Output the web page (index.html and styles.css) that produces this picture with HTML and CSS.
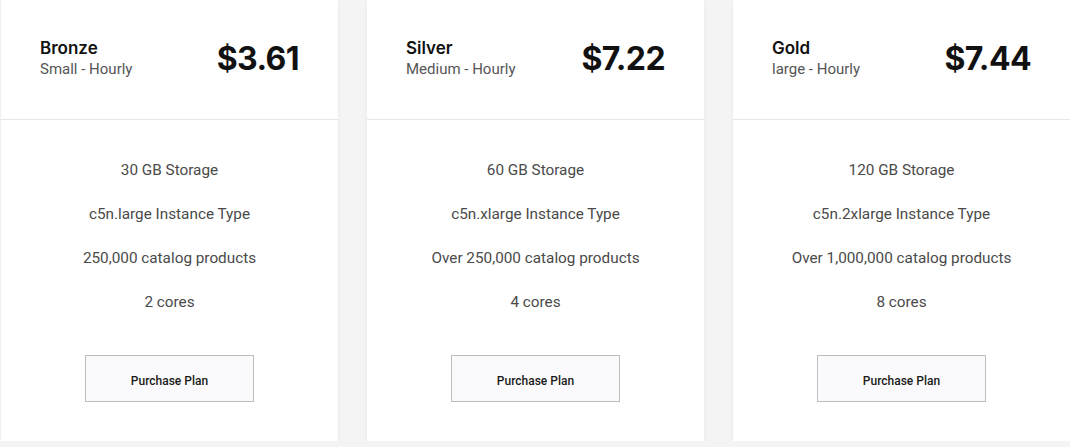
FILE: index.html
```html
<!DOCTYPE html>
<html lang="en">
<head>
<meta charset="utf-8">
<title>Plans</title>
<link rel="stylesheet" href="styles.css">
</head>
<body>
<div class="plans">
  <div class="card">
    <div class="card-head">
      <div class="plan-name">
        <div class="title">Bronze</div>
        <div class="sub">Small - Hourly</div>
      </div>
      <div class="price">$3.61</div>
    </div>
    <div class="card-body">
      <ul class="features">
        <li>30 GB Storage</li>
        <li>c5n.large Instance Type</li>
        <li>250,000 catalog products</li>
        <li>2 cores</li>
      </ul>
      <button class="buy">Purchase Plan</button>
    </div>
  </div>
  <div class="card">
    <div class="card-head">
      <div class="plan-name">
        <div class="title">Silver</div>
        <div class="sub">Medium - Hourly</div>
      </div>
      <div class="price">$7.22</div>
    </div>
    <div class="card-body">
      <ul class="features">
        <li>60 GB Storage</li>
        <li>c5n.xlarge Instance Type</li>
        <li>Over 250,000 catalog products</li>
        <li>4 cores</li>
      </ul>
      <button class="buy">Purchase Plan</button>
    </div>
  </div>
  <div class="card">
    <div class="card-head">
      <div class="plan-name">
        <div class="title">Gold</div>
        <div class="sub">large - Hourly</div>
      </div>
      <div class="price">$7.44</div>
    </div>
    <div class="card-body">
      <ul class="features">
        <li>120 GB Storage</li>
        <li>c5n.2xlarge Instance Type</li>
        <li>Over 1,000,000 catalog products</li>
        <li>8 cores</li>
      </ul>
      <button class="buy">Purchase Plan</button>
    </div>
  </div>
</div>
</body>
</html>
```
FILE: styles.css
```css
html, body {
  margin: 0;
  padding: 0;
  background: #f4f4f4;
}
body {
  font-family: Roboto, "Liberation Sans", sans-serif;
}
.plans {
  display: flex;
  gap: 29px;
  padding-left: 1px;
}
.card {
  flex: 0 0 337px;
  height: 441px;
  background: #fff;
  box-shadow: 0 1px 4px rgba(0, 0, 0, 0.05);
  display: flex;
  flex-direction: column;
}
.card-head {
  height: 119px;
  border-bottom: 1px solid #e6e6e6;
  display: flex;
  align-items: center;
  justify-content: space-between;
  padding: 0 39px;
}
.plan-name {
  padding-bottom: 2px;
}
.title {
  font-family: Inter, sans-serif;
  font-weight: 600;
  font-size: 17px;
  line-height: 19px;
  color: #111;
}
.sub {
  margin-top: 1px;
  font-size: 15px;
  line-height: 20px;
  color: #555;
}
.price {
  font-family: Inter, sans-serif;
  font-weight: 700;
  font-size: 32px;
  letter-spacing: -0.6px;
  color: #111;
  padding-bottom: 3px;
}
.card-body {
  display: flex;
  flex-direction: column;
  align-items: center;
  padding-top: 28px;
}
.features {
  list-style: none;
  margin: 0;
  padding: 0;
  text-align: center;
}
.features li {
  font-size: 15.3px;
  line-height: 44px;
  color: #4a4a4a;
}
.buy {
  margin-top: 31px;
  width: 169px;
  height: 47px;
  padding: 4px 0 0;
  border: 1px solid #bdbdbd;
  background: #fafafc;
  font-family: Roboto, sans-serif;
  font-weight: 500;
  font-size: 12px;
  color: #1a1a1a;
  cursor: pointer;
}
```
